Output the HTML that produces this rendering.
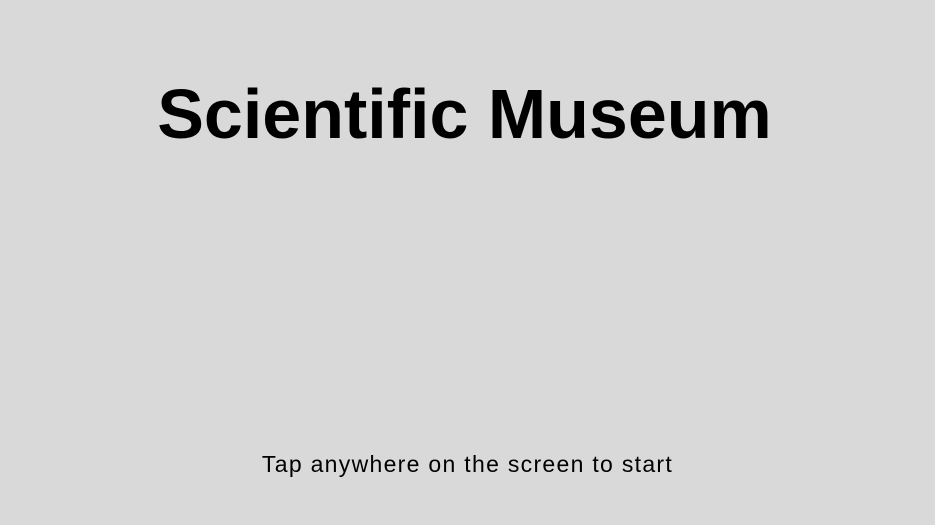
<!DOCTYPE html>
<html><head><meta charset="utf-8"><style>
html,body{margin:0;padding:0;width:935px;height:525px;background:#d9d9d9;overflow:hidden;font-family:"Liberation Sans",sans-serif;color:#000}
.t{position:absolute;left:-3px;width:935px;top:72px;text-align:center;font-weight:bold;font-size:70px;line-height:84px;letter-spacing:0px}
.s{position:absolute;left:0;width:935px;top:449px;text-align:center;font-size:23px;line-height:30px;letter-spacing:1.3px}
</style></head><body>
<div class="t">Scientific Museum</div>
<div class="s">Tap anywhere on the screen to start</div>
</body></html>
